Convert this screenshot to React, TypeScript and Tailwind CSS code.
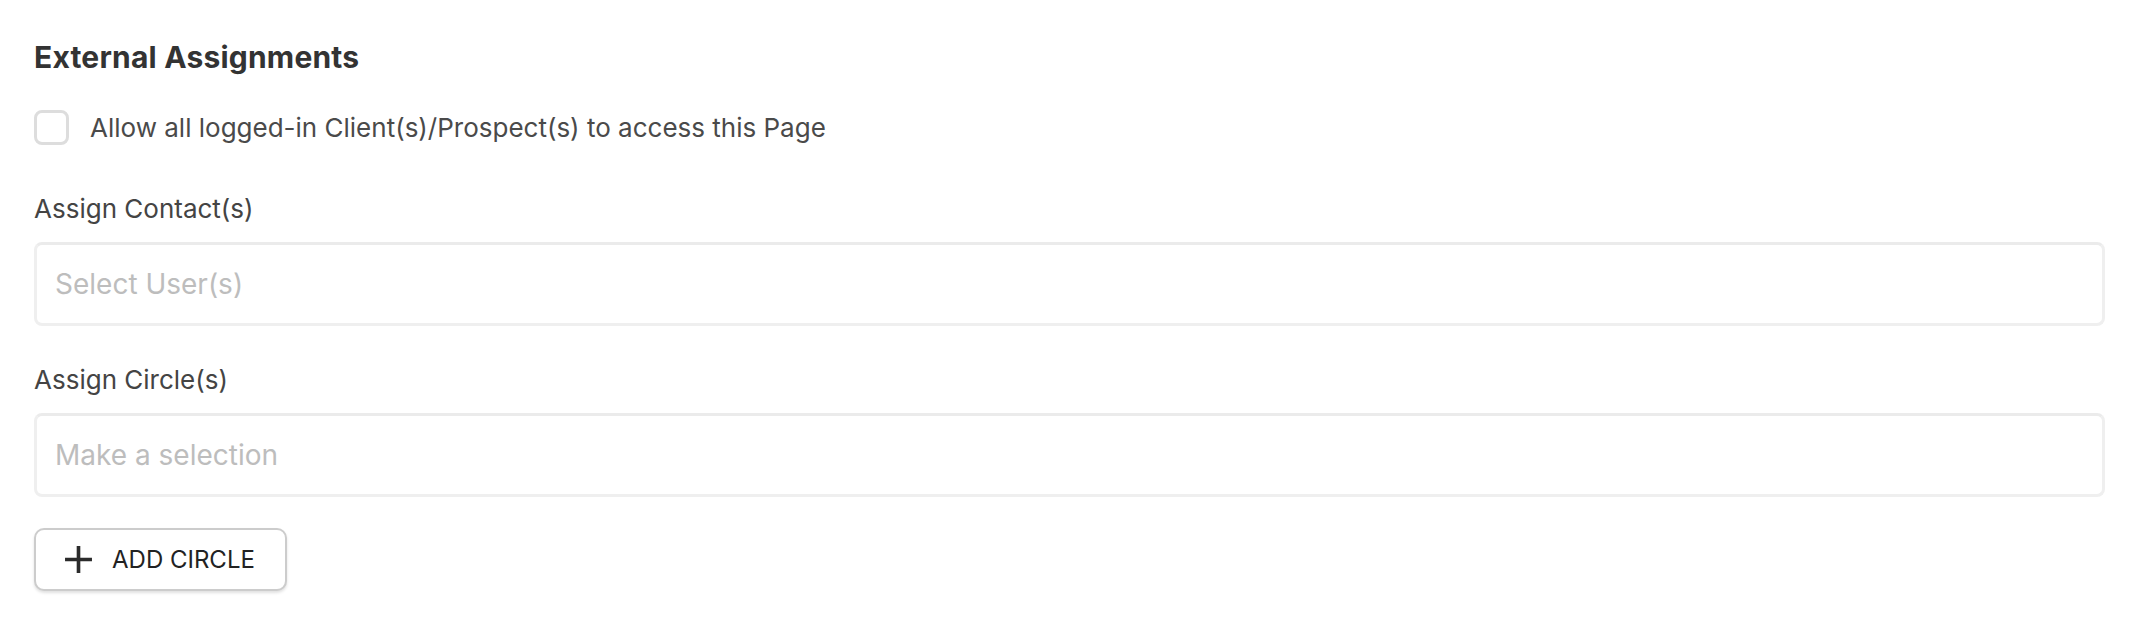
import React from 'react';

const font = { fontFamily: 'Inter, "Noto Sans", sans-serif' };

const PlusIcon = () => (
  <svg width="29" height="29" viewBox="0 0 28 28" fill="none">
    <path d="M14 1v26M1 14h26" stroke="#2b2b2b" strokeWidth="3.5" />
  </svg>
);

const SelectBox = ({ placeholder }: { placeholder: string }) => (
  <div className="h-[84px] w-full rounded-[8px] border-[3px] border-[#efefef] border-t-[#ebebeb] bg-white flex items-center pl-[18px]">
    <span className="text-[28px] leading-[34px] text-[#bdbdbd]">{placeholder}</span>
  </div>
);

export default function App() {
  return (
    <div className="w-full h-[638px] bg-white pl-[34px] pr-[31px] pt-[39px] flex flex-col" style={font}>
      <h2 className="text-[30px] leading-[36px] font-bold tracking-[0.2px] text-[#333333]">External Assignments</h2>

      <label className="mt-[35px] flex items-center gap-[21px]">
        <span className="w-[35px] h-[35px] rounded-[8px] border-[3px] border-[#dddddd] bg-white" />
        <span className="text-[26px] leading-[32px] text-[#4a4a4a]">
          Allow all logged-in Client(s)/Prospect(s) to access this Page
        </span>
      </label>

      <div className="mt-[48px] text-[26px] leading-[32px] text-[#444444]">Assign Contact(s)</div>
      <div className="mt-[17px]">
        <SelectBox placeholder="Select User(s)" />
      </div>

      <div className="mt-[38px] text-[26px] leading-[32px] text-[#444444]">Assign Circle(s)</div>
      <div className="mt-[17px]">
        <SelectBox placeholder="Make a selection" />
      </div>

      <div className="mt-[31px]">
        <button className="h-[63px] w-[253px] rounded-[10px] border-2 border-[#cccccc] bg-white shadow-[0_2px_3px_rgba(0,0,0,0.12)] flex items-center pl-[28px] gap-[19px]">
          <PlusIcon />
          <span className="text-[24px] leading-[28px] text-[#222222]">ADD CIRCLE</span>
        </button>
      </div>
    </div>
  );
}
